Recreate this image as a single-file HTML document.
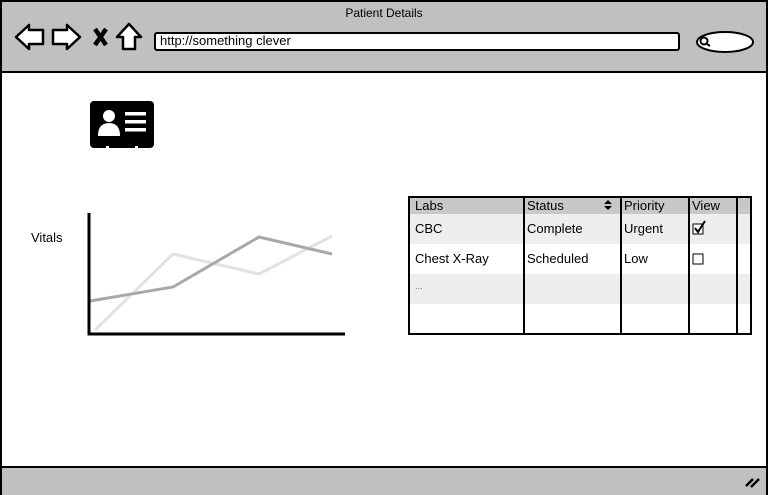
<!DOCTYPE html>
<html><head><style>
body{margin:0;width:768px;height:495px;overflow:hidden;background:#fff;font-family:"Liberation Sans",sans-serif;font-size:13px;color:#000;position:relative}
.a{position:absolute}
</style></head><body>
<div class="a" style="left:0;top:0;width:764px;height:491px;border:2px solid #000;"></div>
<div class="a" style="left:2px;top:2px;width:764px;height:69px;background:#c0c0c0;border-bottom:2px solid #000"></div>
<div class="a" style="left:2px;top:466px;width:764px;height:27px;background:#c0c0c0;border-top:2px solid #000"></div>
<div class="a" style="left:0;top:6px;width:768px;text-align:center;font-size:12px">Patient Details</div>
<svg class="a" style="left:0;top:0" width="768" height="495">
<path d="M16,37 L29,25 L29,30 L43,30 L43,44 L29,44 L29,49 Z" fill="#fff" stroke="#000" stroke-width="2.5" stroke-linejoin="round"/>
<path d="M80,37 L67,25 L67,30 L53,30 L53,44 L67,44 L67,49 Z" fill="#fff" stroke="#000" stroke-width="2.5" stroke-linejoin="round"/>
<path d="M95,29 L106,45 M106,29 L95,45" stroke="#000" stroke-width="4.5"/>
<path d="M129,24 L141,37 L135,37 L135,49 L123,49 L123,37 L117,37 Z" fill="#fff" stroke="#000" stroke-width="2.5" stroke-linejoin="round"/>
<rect x="155" y="33" width="524" height="17" rx="2" fill="#fff" stroke="#000" stroke-width="2"/>
<ellipse cx="725" cy="42" rx="28" ry="10" fill="#fff" stroke="#000" stroke-width="2"/>
<circle cx="704" cy="41" r="3.5" fill="none" stroke="#000" stroke-width="2"/><path d="M707,44 L710,46" stroke="#000" stroke-width="2"/>
<path d="M746,486 L753,479 M751,487 L759,479" stroke="#000" stroke-width="2.5"/>
<rect x="90" y="101" width="64" height="47" rx="4" fill="#000"/>
<circle cx="109" cy="116" r="6" fill="#fff"/>
<path d="M98,136 Q98,123 109,123 Q120,123 120,136 Z" fill="#fff"/>
<rect x="125" y="112" width="21" height="3.5" fill="#fff"/><rect x="125" y="120" width="21" height="3.5" fill="#fff"/><rect x="125" y="128" width="21" height="3.5" fill="#fff"/>
<rect x="106" y="146" width="3" height="4" fill="#fff"/><rect x="135" y="146" width="3" height="4" fill="#fff"/>
<polyline points="95,330 173,254 259,274 332,236" fill="none" stroke="#e2e2e2" stroke-width="3"/>
<polyline points="90,301 173,287 259,237 332,254" fill="none" stroke="#a8a8a8" stroke-width="3"/>
<path d="M89,213 L89,334 L345,334" fill="none" stroke="#000" stroke-width="3"/>
<rect x="410" y="198" width="340" height="16" fill="#c8c8c8"/>
<rect x="410" y="214" width="340" height="30" fill="#eee"/>
<rect x="410" y="274" width="340" height="30" fill="#eee"/>
<rect x="409" y="197" width="342" height="137" fill="none" stroke="#000" stroke-width="2"/>
<path d="M524,197V334M621,197V334M689,197V334M737,197V334" stroke="#000" stroke-width="2"/>
<path d="M604,204L608,200L612,204ZM604,206L612,206L608,210Z" fill="#000"/>
<rect x="693" y="224" width="10" height="10" fill="#fff" stroke="#000"/>
<path d="M695,228L698,232L705,221" fill="none" stroke="#000" stroke-width="2"/>
<rect x="693" y="254" width="10" height="10" fill="#fff" stroke="#000"/>
</svg>
<div class="a" style="left:160px;top:33px">http://something clever</div>
<div class="a" style="left:31px;top:230px">Vitals</div>
<div class="a" style="left:415px;top:198px">Labs</div>
<div class="a" style="left:527px;top:198px">Status</div>
<div class="a" style="left:624px;top:198px">Priority</div>
<div class="a" style="left:692px;top:198px">View</div>
<div class="a" style="left:415px;top:221px">CBC</div>
<div class="a" style="left:527px;top:221px">Complete</div>
<div class="a" style="left:624px;top:221px">Urgent</div>
<div class="a" style="left:415px;top:251px">Chest X-Ray</div>
<div class="a" style="left:527px;top:251px">Scheduled</div>
<div class="a" style="left:624px;top:251px">Low</div>
<div class="a" style="left:415px;top:281px;font-size:9px;color:#666">...</div>
</body></html>
